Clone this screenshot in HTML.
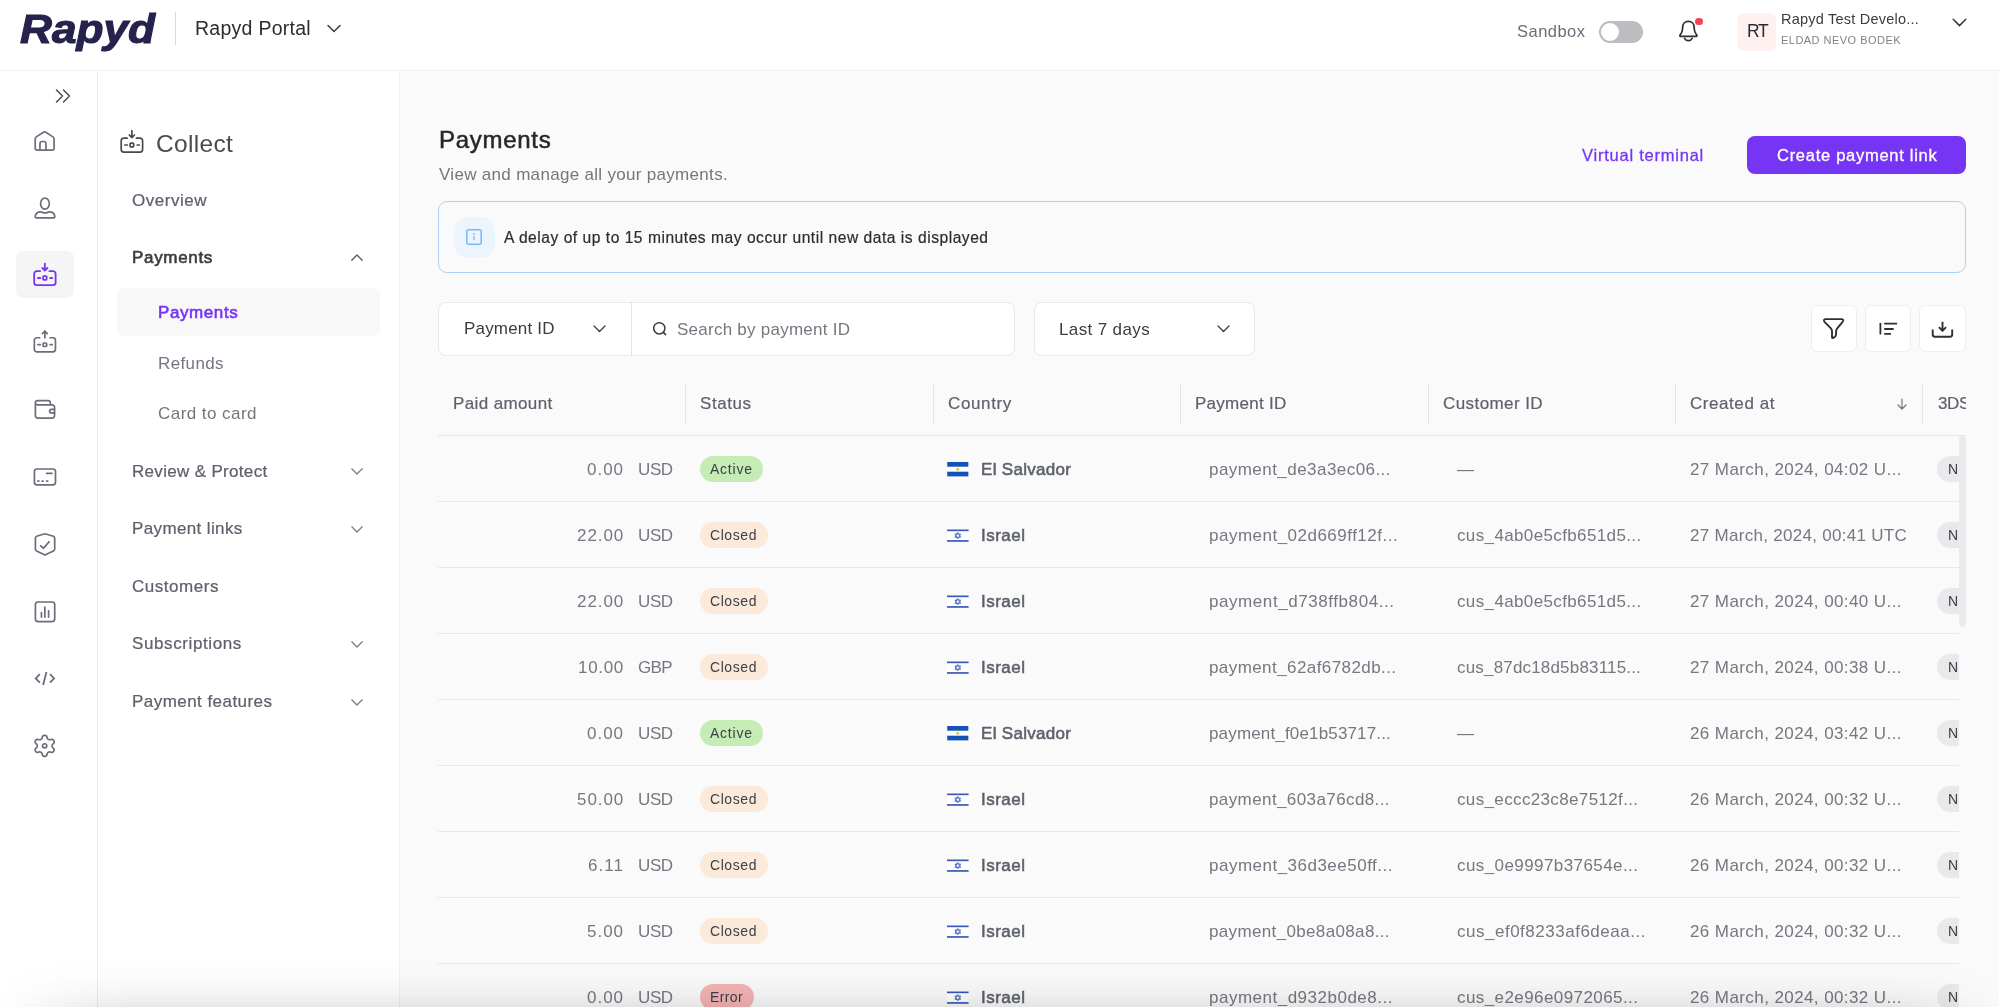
<!DOCTYPE html>
<html lang="en">
<head>
<meta charset="utf-8">
<title>Rapyd Portal - Payments</title>
<style>
*{box-sizing:border-box;margin:0;padding:0}
html,body{width:1999px;height:1008px;overflow:hidden;background:#fff}
body{font-family:"Liberation Sans",sans-serif;color:#4b4e57;position:relative}
.abs{position:absolute}
.t{position:absolute;white-space:nowrap;line-height:1;transform:translateY(-50%);will-change:transform}
svg{position:absolute;overflow:visible}
.ic{fill:none;stroke:#5f636d;stroke-width:1.7;stroke-linecap:round;stroke-linejoin:round}
.pu{stroke:#7635f5}
#hdr{left:0;top:0;width:1999px;height:71px;background:#fff;border-bottom:1px solid #f1f1f2}
#sb1{left:0;top:71px;width:98px;height:937px;background:#fff;border-right:1px solid #ececee}
#sb2{left:98px;top:71px;width:302px;height:937px;background:#fff;border-right:1px solid #f1f1f2}
#main{left:400px;top:71px;width:1599px;height:937px;background:#fafafa}
.sep{position:absolute;top:383px;width:1px;height:40px;background:#e4e4e7}
.rl{position:absolute;left:438px;width:1521px;height:1px;background:#e8e8ea}
.badge{position:absolute;height:26px;border-radius:13px}
.b-Active{background:#c6ecb6}
.b-Closed{background:#fbe9da}
.b-Error{background:#f5b4b4}
.b-N{background:#e9e9eb}
.box{position:absolute;background:#fff;border:1px solid #e9e9ec}
</style>
</head>
<body>
<div id="hdr" class="abs"></div>
<div id="sb1" class="abs"></div>
<div id="sb2" class="abs"></div>
<div id="main" class="abs"></div>

<!-- header shapes -->
<div class="abs" style="left:175px;top:12px;width:1px;height:33px;background:#d9d9de"></div>
<svg style="left:327px;top:24px" width="14" height="9" viewBox="0 0 14 9"><path class="ic" style="stroke:#3a3c42;stroke-width:1.5" d="M1 1.5 L7 7.5 L13 1.5"/></svg>
<div class="abs" style="left:1598.5px;top:20.5px;width:44px;height:22.5px;border-radius:11.5px;background:#bcbdc1"></div>
<div class="abs" style="left:1600.5px;top:22.5px;width:18.5px;height:18.5px;border-radius:50%;background:#fff"></div>
<svg style="left:1677px;top:18px" width="24" height="24" viewBox="0 0 24 24"><path class="ic" style="stroke:#2e2f34;stroke-width:1.7" d="M3.6 18.4 C2.9 18.4 2.6 17.7 3.0 17.1 C4.8 14.9 5.6 13.3 5.6 10.5 V9.6 C5.6 6.0 8.0 3.4 11.4 3.4 C14.8 3.4 17.2 6.0 17.2 9.6 V10.5 C17.2 13.3 18.0 14.9 19.8 17.1 C20.2 17.7 19.9 18.4 19.2 18.4 Z M7.6 20.4 C8.4 21.9 9.7 22.7 11.4 22.7 C13.1 22.7 14.4 21.9 15.2 20.4"/></svg>
<div class="abs" style="left:1695.2px;top:17.500px;width:7.600px;height:7.600px;border-radius:50%;background:#f0444f"></div>
<div class="abs" style="left:1737px;top:12.5px;width:39px;height:38.5px;border-radius:7px;background:#fef1f0"></div>
<svg style="left:1952px;top:18px" width="15" height="9" viewBox="0 0 15 9"><path class="ic" style="stroke:#3a3c42;stroke-width:1.5" d="M1.2 1.2 L7.500 7.600 L13.800 1.2"/></svg>

<!-- sidebar 1 icons -->
<svg style="left:55px;top:89px" width="16" height="14" viewBox="0 0 16 14"><path class="ic" style="stroke:#4a4b50;stroke-width:1.5" d="M1.5 1 L7.500 7 L1.5 13 M8.5 1 L14.500 7 L8.5 13"/></svg>
<svg style="left:25px;top:121px" width="40" height="40" viewBox="0 0 40 40"><g fill="none" stroke="#6a6e78" stroke-width="1.7" stroke-linecap="round" stroke-linejoin="round"><path d="M18.9 11.0 L11.3 15.9 Q10.2 16.6 10.2 17.9 V27.0 Q10.2 29.1 12.3 29.1 H27.0 Q29.1 29.1 29.1 27.0 V17.9 Q29.1 16.6 28.0 15.9 L20.4 11.0 Q19.65 10.5 18.9 11.0 Z"/><path d="M14.95 29.1 V22.8 Q14.95 20.5 17.25 20.5 H18.65 Q20.95 20.5 20.95 22.8 V29.1"/></g></svg>
<svg style="left:25px;top:188px" width="40" height="40" viewBox="0 0 40 40"><g fill="none" stroke="#6a6e78" stroke-width="1.7" stroke-linecap="round" stroke-linejoin="round"><ellipse cx="19.95" cy="15.65" rx="4.4" ry="5.5"/><path d="M12.0 29.9 Q10.2 29.9 10.2 28.4 C10.4 25.6 13.0 23.7 15.4 23.8 C17.0 23.9 18.2 24.9 20 24.9 C21.8 24.9 23.0 23.9 24.6 23.8 C27.0 23.7 29.6 25.6 29.8 28.4 Q29.8 29.9 28.0 29.9 Z"/></g></svg>
<div class="abs" style="left:16px;top:251px;width:58px;height:47px;border-radius:7px;background:#f5f5f6"></div>
<svg style="left:25px;top:255px" width="40" height="40" viewBox="0 0 40 40"><g fill="none" stroke="#7635f5" stroke-width="1.8" stroke-linecap="round" stroke-linejoin="round"><path d="M15.15 16.2 H11.8 A2.6 2.6 0 0 0 9.2 18.8 V27.5 A2.6 2.6 0 0 0 11.8 30.1 H28 A2.6 2.6 0 0 0 30.6 27.5 V18.8 A2.6 2.6 0 0 0 28 16.2 H24.45"/><path d="M19.85 8.6 V15.5 M17.3 13.0 L19.85 15.6 L22.4 13.0"/><path d="M12.9 23 H15.3 M25.2 23 H27.2"/><rect x="18.05" y="21.2" width="3.6" height="3.7" rx="0.8"/></g></svg>
<svg style="left:25px;top:322px" width="40" height="40" viewBox="0 0 40 40"><g fill="none" stroke="#6a6e78" stroke-width="1.7" stroke-linecap="round" stroke-linejoin="round"><path d="M14.65 15.75 H11.95 A2.6 2.6 0 0 0 9.35 18.35 V27.3 A2.6 2.6 0 0 0 11.95 29.9 H27.85 A2.6 2.6 0 0 0 30.45 27.3 V18.35 A2.6 2.6 0 0 0 27.85 15.75 H25.05"/><path d="M19.85 15.85 V9.0 M17.4 11.6 L19.85 9.0 L22.3 11.6"/><path d="M12.9 22.7 H15.3 M25.2 22.7 H27.2"/><rect x="18.05" y="21.0" width="3.6" height="3.5" rx="0.8"/></g></svg>
<svg style="left:25px;top:389px" width="40" height="40" viewBox="0 0 40 40"><g fill="none" stroke="#6a6e78" stroke-width="1.7" stroke-linecap="round" stroke-linejoin="round"><path d="M10.4 13.4 V26.8 A2.3 2.3 0 0 0 12.7 29.1 H27.2 A2.3 2.3 0 0 0 29.5 26.8 V18.2 A2.3 2.3 0 0 0 27.2 15.9 H12.5 A2.1 2.1 0 0 1 10.4 13.7 A2.1 2.1 0 0 1 12.5 11.6 H23.2 A2.1 2.1 0 0 1 25.3 13.7 V15.9"/><path d="M29.5 20.3 H26.45 A1.82 1.82 0 0 0 26.45 23.95 H29.5"/></g></svg>
<svg style="left:25px;top:457px" width="40" height="40" viewBox="0 0 40 40"><g fill="none" stroke="#6a6e78" stroke-width="1.7" stroke-linecap="round" stroke-linejoin="round"><rect x="9.4" y="12" width="21.1" height="15.9" rx="2.6"/><path d="M21.6 16.35 H27.0"/><path d="M12.9 24.1 H13.9 M17.1 24.1 H18.05 M21.6 24.1 H22.8"/></g></svg>
<svg style="left:25px;top:524px" width="40" height="40" viewBox="0 0 40 40"><g fill="none" stroke="#6a6e78" stroke-width="1.7" stroke-linecap="round" stroke-linejoin="round"><path d="M19.0 10.0 L11.6 12.2 Q10.4 12.7 10.4 14.2 V25.0 Q10.4 26.3 11.5 26.9 L19.0 30.6 Q19.9 31.0 20.8 30.6 L28.5 26.9 Q29.7 26.3 29.7 25.0 V14.2 Q29.7 12.7 28.4 12.2 L20.8 10.0 Q19.9 9.7 19.0 10.0 Z"/><path d="M15.2 21.3 L18.3 24.2 L24.5 17.4" stroke-linecap="butt" stroke-linejoin="miter"/></g></svg>
<svg style="left:25px;top:592px" width="40" height="40" viewBox="0 0 40 40"><g fill="none" stroke="#6a6e78" stroke-width="1.7" stroke-linecap="round" stroke-linejoin="round"><rect x="10.4" y="10.0" width="19.3" height="19.7" rx="2.6"/><path d="M16.45 20.6 V25.1 M19.85 15.0 V25.1 M23.6 18.8 V25.1"/></g></svg>
<svg style="left:25px;top:658px" width="40" height="40" viewBox="0 0 40 40"><g fill="none" stroke="#6a6e78" stroke-width="1.8" stroke-linecap="butt" stroke-linejoin="miter"><path d="M14.8 16.1 L10.7 20.4 L14.8 24.7 M25.0 16.1 L29.1 20.4 L25.0 24.7 M21.5 14.0 L18.1 26.9"/></g></svg>
<svg style="left:25px;top:725px" width="40" height="40" viewBox="0 0 40 40"><g fill="none" stroke="#6a6e78" stroke-width="1.7" stroke-linecap="round" stroke-linejoin="round"><path d="M19.65 10.30 L20.11 10.34 L20.56 10.46 L20.99 10.66 L21.40 10.94 L21.76 11.34 L21.98 12.16 L22.13 12.97 L22.37 13.39 L22.60 13.72 L22.85 13.99 L23.10 14.22 L23.38 14.40 L23.67 14.54 L23.99 14.65 L24.35 14.73 L24.75 14.77 L25.23 14.76 L26.01 14.49 L26.83 14.27 L27.36 14.38 L27.81 14.59 L28.20 14.87 L28.52 15.20 L28.79 15.57 L28.98 15.99 L29.10 16.44 L29.15 16.92 L29.10 17.41 L28.94 17.92 L28.34 18.52 L27.72 19.06 L27.47 19.47 L27.30 19.84 L27.19 20.19 L27.12 20.52 L27.10 20.85 L27.12 21.18 L27.19 21.51 L27.30 21.86 L27.47 22.23 L27.72 22.64 L28.34 23.18 L28.94 23.78 L29.10 24.29 L29.15 24.78 L29.10 25.26 L28.98 25.71 L28.79 26.12 L28.52 26.50 L28.20 26.83 L27.81 27.11 L27.36 27.32 L26.83 27.43 L26.01 27.21 L25.23 26.94 L24.75 26.93 L24.35 26.97 L23.99 27.05 L23.67 27.16 L23.38 27.30 L23.10 27.48 L22.85 27.71 L22.60 27.98 L22.37 28.31 L22.13 28.73 L21.98 29.54 L21.76 30.36 L21.40 30.76 L20.99 31.04 L20.56 31.24 L20.11 31.36 L19.65 31.40 L19.19 31.36 L18.74 31.24 L18.31 31.04 L17.90 30.76 L17.54 30.36 L17.32 29.54 L17.17 28.73 L16.93 28.31 L16.70 27.98 L16.45 27.71 L16.20 27.48 L15.92 27.30 L15.63 27.16 L15.31 27.05 L14.95 26.97 L14.55 26.93 L14.07 26.94 L13.29 27.21 L12.47 27.43 L11.94 27.32 L11.49 27.11 L11.10 26.83 L10.78 26.50 L10.51 26.13 L10.32 25.71 L10.20 25.26 L10.15 24.78 L10.20 24.29 L10.36 23.78 L10.96 23.18 L11.58 22.64 L11.83 22.23 L12.00 21.86 L12.11 21.51 L12.18 21.18 L12.20 20.85 L12.18 20.52 L12.11 20.19 L12.00 19.84 L11.83 19.47 L11.58 19.06 L10.96 18.52 L10.36 17.92 L10.20 17.41 L10.15 16.92 L10.20 16.44 L10.32 15.99 L10.51 15.58 L10.78 15.20 L11.10 14.87 L11.49 14.59 L11.94 14.38 L12.47 14.27 L13.29 14.49 L14.07 14.76 L14.55 14.77 L14.95 14.73 L15.31 14.65 L15.63 14.54 L15.93 14.40 L16.20 14.22 L16.45 13.99 L16.70 13.72 L16.93 13.39 L17.17 12.97 L17.32 12.16 L17.54 11.34 L17.90 10.94 L18.31 10.66 L18.74 10.46 L19.19 10.34 Z"/><circle cx="19.65" cy="20.85" r="2.1"/></g></svg>
<svg style="left:111.7px;top:121.7px" width="40" height="40" viewBox="0 0 40 40"><g fill="none" stroke="#4a4b50" stroke-width="1.7" stroke-linecap="round" stroke-linejoin="round"><path d="M15.15 16.2 H11.8 A2.6 2.6 0 0 0 9.2 18.8 V27.5 A2.6 2.6 0 0 0 11.8 30.1 H28 A2.6 2.6 0 0 0 30.6 27.5 V18.8 A2.6 2.6 0 0 0 28 16.2 H24.45"/><path d="M19.85 8.6 V15.5 M17.3 13.0 L19.85 15.6 L22.4 13.0"/><path d="M12.9 23 H15.3 M25.2 23 H27.2"/><rect x="18.05" y="21.2" width="3.6" height="3.7" rx="0.8"/></g></svg>

<!-- sidebar 2 shapes -->
<div class="abs" style="left:117px;top:288px;width:263px;height:48px;border-radius:6px;background:#f8f8f9"></div>
<svg style="left:351px;top:253.500px" width="12" height="7" viewBox="0 0 12 7"><path class="ic" style="stroke-width:1.3;stroke:#55585f" d="M0.8 6.2 L6 1 L11.2 6.2"/></svg>
<svg style="left:351px;top:468px" width="12" height="7" viewBox="0 0 12 7"><path class="ic" style="stroke-width:1.25;stroke:#777a83" d="M0.8 0.8 L6 6 L11.2 0.8"/></svg>
<svg style="left:351px;top:525.500px" width="12" height="7" viewBox="0 0 12 7"><path class="ic" style="stroke-width:1.25;stroke:#777a83" d="M0.8 0.8 L6 6 L11.2 0.8"/></svg>
<svg style="left:351px;top:640.500px" width="12" height="7" viewBox="0 0 12 7"><path class="ic" style="stroke-width:1.25;stroke:#777a83" d="M0.8 0.8 L6 6 L11.2 0.8"/></svg>
<svg style="left:351px;top:698.500px" width="12" height="7" viewBox="0 0 12 7"><path class="ic" style="stroke-width:1.25;stroke:#777a83" d="M0.8 0.8 L6 6 L11.2 0.8"/></svg>

<!-- main shapes -->
<div class="abs" style="left:1747px;top:136px;width:219px;height:38px;border-radius:8px;background:#7635f5"></div>
<div class="abs" style="left:438px;top:201px;width:1528px;height:72px;border-radius:9px;border:1px solid #a9d3f8;background:#fafafa"></div>
<div class="abs" style="left:454px;top:217px;width:40.5px;height:41px;border-radius:14px;background:#ecf5fe"></div>
<svg style="left:466px;top:229px" width="16" height="16" viewBox="0 0 16 16"><rect x="0.800" y="0.800" width="14.400" height="14.400" rx="2" fill="none" stroke="#76b9fb" stroke-width="1.5"/><path d="M8 7.200 V11.200" stroke="#76b9fb" stroke-width="1.4" fill="none"/><circle cx="8" cy="5" r="0.900" fill="#76b9fb"/></svg>

<div class="box" style="left:438px;top:301.5px;width:577px;height:54px;border-radius:8px"></div>
<div class="abs" style="left:630.5px;top:302.5px;width:1px;height:52px;background:#e2e2e5"></div>
<svg style="left:593px;top:325px" width="13" height="8" viewBox="0 0 13 8"><path class="ic" style="stroke:#3a3c42;stroke-width:1.4" d="M1 1 L6.500 6.500 L12 1"/></svg>
<svg style="left:651.500px;top:320.500px" width="16" height="16" viewBox="0 0 16 16"><circle class="ic" style="stroke:#3a3c42;stroke-width:1.5" cx="7.300" cy="7.300" r="5.600"/><path class="ic" style="stroke:#3a3c42;stroke-width:1.5" d="M11.400 11.400 L13.600 13.600"/></svg>
<div class="box" style="left:1034px;top:302px;width:221px;height:53.500px;border-radius:8px"></div>
<svg style="left:1217px;top:325px" width="13" height="8" viewBox="0 0 13 8"><path class="ic" style="stroke:#3a3c42;stroke-width:1.4" d="M1 1 L6.500 6.500 L12 1"/></svg>
<div class="box" style="left:1811px;top:304.5px;width:46px;height:47px;border-radius:6px;border-color:#efeff1"></div>
<div class="box" style="left:1865px;top:304.5px;width:46px;height:47px;border-radius:6px;border-color:#efeff1"></div>
<div class="box" style="left:1919px;top:304.5px;width:46.5px;height:47px;border-radius:6px;border-color:#efeff1"></div>
<svg style="left:0;top:0" width="1999" height="400" viewBox="0 0 1999 400"><g fill="none" stroke="#2e2f34" stroke-width="1.9" stroke-linejoin="round"><path d="M1825.6 319.1 H1841.6 Q1843.6 319.1 1843.1 321.0 Q1842.8 321.8 1842.0 322.7 L1837.4 328.2 Q1836.1 329.6 1836.1 331.2 V334.0 Q1836.1 336.0 1834.8 336.9 L1833.2 337.9 Q1832.0 338.4 1832.0 337.2 V331.2 Q1832.0 329.6 1830.7 328.2 L1825.2 322.7 Q1824.4 321.8 1824.1 321.0 Q1823.6 319.1 1825.6 319.1 Z"/><path stroke-width="1.8" d="M1880.4 322.9 V334.6 M1884.2 323.6 H1897.1 M1884.2 329 H1893.7 M1884.2 333.9 H1891"/><path stroke-width="1.9" d="M1942.5 321.8 V330.4 M1938.9 327.2 L1942.5 330.8 L1946.1 327.2"/><path stroke-width="1.9" d="M1932.7 329.4 V334.6 Q1932.7 336.8 1934.9 336.8 H1950.0 Q1952.2 336.8 1952.2 334.6 V329.4"/></g></svg>

<!-- table -->
<div class="sep" style="left:685px"></div>
<div class="sep" style="left:932.5px"></div>
<div class="sep" style="left:1180px"></div>
<div class="sep" style="left:1427.5px"></div>
<div class="sep" style="left:1675px"></div>
<div class="sep" style="left:1922px"></div>
<div class="rl" style="top:435px;background:#e6e6e9"></div>
<div class="rl" style="top:501px"></div>
<div class="rl" style="top:567px"></div>
<div class="rl" style="top:633px"></div>
<div class="rl" style="top:699px"></div>
<div class="rl" style="top:765px"></div>
<div class="rl" style="top:831px"></div>
<div class="rl" style="top:897px"></div>
<div class="rl" style="top:963px"></div>
<div class="badge b-Active" style="left:699.5px;top:456px;width:63.5px"></div>
<div class="badge b-N" style="left:1936.5px;top:456px;width:40px"></div>
<svg style="left:947.2px;top:461.9px" width="21.6" height="14.4" viewBox="0 0 22 15"><rect width="22" height="15" fill="#fff"/><rect width="22" height="4.9" fill="#1452b8"/><rect y="10.1" width="22" height="4.9" fill="#1452b8"/><circle cx="11" cy="7.6" r="1.5" fill="#dcc04e"/></svg>
<div class="badge b-Closed" style="left:699.5px;top:522px;width:68px"></div>
<div class="badge b-N" style="left:1936.5px;top:522px;width:40px"></div>
<svg style="left:947.2px;top:527.5px" width="21.6" height="15" viewBox="0 0 22 15"><rect y="1.2" width="22" height="12.8" fill="#fff"/><rect y="1.4" width="22" height="1.7" fill="#3a55b8"/><rect y="12.2" width="22" height="1.7" fill="#3a55b8"/><path d="M11 4.4 L13.9 9.3 H8.1 Z M11 10.9 L8.1 6.0 H13.9 Z" fill="none" stroke="#4a63c0" stroke-width="0.9"/></svg>
<div class="badge b-Closed" style="left:699.5px;top:588px;width:68px"></div>
<div class="badge b-N" style="left:1936.5px;top:588px;width:40px"></div>
<svg style="left:947.2px;top:593.5px" width="21.6" height="15" viewBox="0 0 22 15"><rect y="1.2" width="22" height="12.8" fill="#fff"/><rect y="1.4" width="22" height="1.7" fill="#3a55b8"/><rect y="12.2" width="22" height="1.7" fill="#3a55b8"/><path d="M11 4.4 L13.9 9.3 H8.1 Z M11 10.9 L8.1 6.0 H13.9 Z" fill="none" stroke="#4a63c0" stroke-width="0.9"/></svg>
<div class="badge b-Closed" style="left:699.5px;top:654px;width:68px"></div>
<div class="badge b-N" style="left:1936.5px;top:654px;width:40px"></div>
<svg style="left:947.2px;top:659.5px" width="21.6" height="15" viewBox="0 0 22 15"><rect y="1.2" width="22" height="12.8" fill="#fff"/><rect y="1.4" width="22" height="1.7" fill="#3a55b8"/><rect y="12.2" width="22" height="1.7" fill="#3a55b8"/><path d="M11 4.4 L13.9 9.3 H8.1 Z M11 10.9 L8.1 6.0 H13.9 Z" fill="none" stroke="#4a63c0" stroke-width="0.9"/></svg>
<div class="badge b-Active" style="left:699.5px;top:720px;width:63.5px"></div>
<div class="badge b-N" style="left:1936.5px;top:720px;width:40px"></div>
<svg style="left:947.2px;top:725.9px" width="21.6" height="14.4" viewBox="0 0 22 15"><rect width="22" height="15" fill="#fff"/><rect width="22" height="4.9" fill="#1452b8"/><rect y="10.1" width="22" height="4.9" fill="#1452b8"/><circle cx="11" cy="7.6" r="1.5" fill="#dcc04e"/></svg>
<div class="badge b-Closed" style="left:699.5px;top:786px;width:68px"></div>
<div class="badge b-N" style="left:1936.5px;top:786px;width:40px"></div>
<svg style="left:947.2px;top:791.5px" width="21.6" height="15" viewBox="0 0 22 15"><rect y="1.2" width="22" height="12.8" fill="#fff"/><rect y="1.4" width="22" height="1.7" fill="#3a55b8"/><rect y="12.2" width="22" height="1.7" fill="#3a55b8"/><path d="M11 4.4 L13.9 9.3 H8.1 Z M11 10.9 L8.1 6.0 H13.9 Z" fill="none" stroke="#4a63c0" stroke-width="0.9"/></svg>
<div class="badge b-Closed" style="left:699.5px;top:852px;width:68px"></div>
<div class="badge b-N" style="left:1936.5px;top:852px;width:40px"></div>
<svg style="left:947.2px;top:857.5px" width="21.6" height="15" viewBox="0 0 22 15"><rect y="1.2" width="22" height="12.8" fill="#fff"/><rect y="1.4" width="22" height="1.7" fill="#3a55b8"/><rect y="12.2" width="22" height="1.7" fill="#3a55b8"/><path d="M11 4.4 L13.9 9.3 H8.1 Z M11 10.9 L8.1 6.0 H13.9 Z" fill="none" stroke="#4a63c0" stroke-width="0.9"/></svg>
<div class="badge b-Closed" style="left:699.5px;top:918px;width:68px"></div>
<div class="badge b-N" style="left:1936.5px;top:918px;width:40px"></div>
<svg style="left:947.2px;top:923.5px" width="21.6" height="15" viewBox="0 0 22 15"><rect y="1.2" width="22" height="12.8" fill="#fff"/><rect y="1.4" width="22" height="1.7" fill="#3a55b8"/><rect y="12.2" width="22" height="1.7" fill="#3a55b8"/><path d="M11 4.4 L13.9 9.3 H8.1 Z M11 10.9 L8.1 6.0 H13.9 Z" fill="none" stroke="#4a63c0" stroke-width="0.9"/></svg>
<div class="badge b-Error" style="left:699.5px;top:984px;width:54.5px"></div>
<div class="badge b-N" style="left:1936.5px;top:984px;width:40px"></div>
<svg style="left:947.2px;top:989.5px" width="21.6" height="15" viewBox="0 0 22 15"><rect y="1.2" width="22" height="12.8" fill="#fff"/><rect y="1.4" width="22" height="1.7" fill="#3a55b8"/><rect y="12.2" width="22" height="1.7" fill="#3a55b8"/><path d="M11 4.4 L13.9 9.3 H8.1 Z M11 10.9 L8.1 6.0 H13.9 Z" fill="none" stroke="#4a63c0" stroke-width="0.9"/></svg>
<svg style="left:1896.3px;top:397.5px" width="12" height="12" viewBox="0 0 12 12"><path class="ic" style="stroke:#73767f;stroke-width:1.2" d="M6 1 V11 M2 7 L6 11 L10 7"/></svg>

<div class="t" style="left:20.0px;top:28.7px;font-size:41.5px;color:#25224c;font-weight:700;font-style:italic;-webkit-text-stroke:1.1px #25224c;transform:translateY(-50%) scaleX(1.065);transform-origin:0 50%;">Rapyd</div>
<div class="t" style="left:195.0px;top:28.8px;font-size:19.5px;color:#2b2c32;letter-spacing:0.27px;">Rapyd Portal</div>
<div class="t" style="left:1517.0px;top:31.2px;font-size:16.5px;color:#6b6e78;letter-spacing:0.48px;">Sandbox</div>
<div class="t" style="left:1746.8px;top:32.4px;font-size:17.5px;color:#2b2c32;letter-spacing:-1.20px;">RT</div>
<div class="t" style="left:1781.0px;top:18.7px;font-size:14.5px;color:#3a3c42;letter-spacing:0.22px;">Rapyd Test Develo...</div>
<div class="t" style="left:1781.0px;top:40.0px;font-size:11px;color:#7f828a;letter-spacing:0.47px;">ELDAD NEVO BODEK</div>
<div class="t" style="left:156.3px;top:143.5px;font-size:24.5px;color:#4a4b50;letter-spacing:0.34px;">Collect</div>
<div class="t" style="left:132.0px;top:199.6px;font-size:17px;color:#5d616b;letter-spacing:0.52px;-webkit-text-stroke:0.22px #5d616b;">Overview</div>
<div class="t" style="left:131.8px;top:257.3px;font-size:17px;color:#3a3c42;letter-spacing:0.68px;-webkit-text-stroke:0.6px #3a3c42;">Payments</div>
<div class="t" style="left:157.7px;top:312.3px;font-size:17px;color:#7635f5;letter-spacing:0.59px;-webkit-text-stroke:0.6px #7635f5;">Payments</div>
<div class="t" style="left:157.7px;top:362.8px;font-size:17px;color:#73767f;letter-spacing:0.38px;">Refunds</div>
<div class="t" style="left:157.7px;top:413.3px;font-size:17px;color:#73767f;letter-spacing:0.45px;">Card to card</div>
<div class="t" style="left:131.8px;top:471.3px;font-size:17px;color:#5d616b;letter-spacing:0.32px;-webkit-text-stroke:0.22px #5d616b;">Review &amp; Protect</div>
<div class="t" style="left:131.8px;top:528.1px;font-size:17px;color:#5d616b;letter-spacing:0.37px;-webkit-text-stroke:0.22px #5d616b;">Payment links</div>
<div class="t" style="left:131.8px;top:586.3px;font-size:17px;color:#5d616b;letter-spacing:0.53px;-webkit-text-stroke:0.22px #5d616b;">Customers</div>
<div class="t" style="left:131.8px;top:643.4px;font-size:17px;color:#5d616b;letter-spacing:0.61px;-webkit-text-stroke:0.22px #5d616b;">Subscriptions</div>
<div class="t" style="left:131.8px;top:701.3px;font-size:17px;color:#5d616b;letter-spacing:0.45px;-webkit-text-stroke:0.22px #5d616b;">Payment features</div>
<div class="t" style="left:438.7px;top:140.0px;font-size:24px;color:#26272b;letter-spacing:0.72px;-webkit-text-stroke:0.5px #26272b;">Payments</div>
<div class="t" style="left:438.7px;top:173.8px;font-size:17px;color:#73767f;letter-spacing:0.31px;">View and manage all your payments.</div>
<div class="t" style="left:1582.0px;top:154.5px;font-size:16.5px;color:#7635f5;letter-spacing:0.77px;-webkit-text-stroke:0.3px #7635f5;">Virtual terminal</div>
<div class="t" style="left:1776.5px;top:154.5px;font-size:16.5px;color:#ffffff;letter-spacing:0.72px;-webkit-text-stroke:0.3px #fff;">Create payment link</div>
<div class="t" style="left:504.4px;top:238.2px;font-size:15.6px;color:#2b2c32;letter-spacing:0.52px;-webkit-text-stroke:0.2px #2b2c32;">A delay of up to 15 minutes may occur until new data is displayed</div>
<div class="t" style="left:464.0px;top:327.9px;font-size:17px;color:#3a3c42;letter-spacing:0.19px;">Payment ID</div>
<div class="t" style="left:676.8px;top:329.3px;font-size:17px;color:#75787f;letter-spacing:0.25px;">Search by payment ID</div>
<div class="t" style="left:1059.0px;top:328.8px;font-size:17px;color:#3a3c42;letter-spacing:0.37px;">Last 7 days</div>
<div class="t" style="left:453.0px;top:403.3px;font-size:17px;color:#5d616b;letter-spacing:0.38px;-webkit-text-stroke:0.2px #5d616b;">Paid amount</div>
<div class="t" style="left:700.0px;top:403.3px;font-size:17px;color:#5d616b;letter-spacing:0.57px;-webkit-text-stroke:0.2px #5d616b;">Status</div>
<div class="t" style="left:948.0px;top:403.3px;font-size:17px;color:#5d616b;letter-spacing:0.64px;-webkit-text-stroke:0.2px #5d616b;">Country</div>
<div class="t" style="left:1195.0px;top:403.3px;font-size:17px;color:#5d616b;letter-spacing:0.27px;-webkit-text-stroke:0.2px #5d616b;">Payment ID</div>
<div class="t" style="left:1442.5px;top:403.3px;font-size:17px;color:#5d616b;letter-spacing:0.42px;-webkit-text-stroke:0.2px #5d616b;">Customer ID</div>
<div class="t" style="left:1690.0px;top:403.3px;font-size:17px;color:#5d616b;letter-spacing:0.56px;-webkit-text-stroke:0.2px #5d616b;">Created at</div>
<div class="t" style="left:1938.0px;top:403.3px;font-size:17px;color:#5d616b;letter-spacing:-0.36px;-webkit-text-stroke:0.2px #5d616b;">3DS</div>
<div class="t" style="left:587.0px;top:469.3px;font-size:17px;color:#757881;letter-spacing:0.98px;">0.00</div>
<div class="t" style="left:638.0px;top:469.3px;font-size:17px;color:#757881;letter-spacing:-0.40px;">USD</div>
<div class="t" style="left:710.0px;top:468.5px;font-size:14px;color:#3c3f47;letter-spacing:0.76px;">Active</div>
<div class="t" style="left:981.0px;top:469.3px;font-size:17px;color:#5d616b;letter-spacing:0.31px;-webkit-text-stroke:0.55px #5d616b;">El Salvador</div>
<div class="t" style="left:1209.0px;top:469.3px;font-size:17px;color:#757881;letter-spacing:0.45px;">payment_de3a3ec06...</div>
<div class="t" style="left:1456.5px;top:469.3px;font-size:17px;color:#757881;">—</div>
<div class="t" style="left:1690.0px;top:469.3px;font-size:17px;color:#757881;letter-spacing:0.41px;">27 March, 2024, 04:02 U...</div>
<div class="t" style="left:1947.5px;top:469.0px;font-size:14px;color:#3c3f47;">N</div>
<div class="t" style="left:576.7px;top:535.3px;font-size:17px;color:#757881;letter-spacing:0.93px;">22.00</div>
<div class="t" style="left:638.0px;top:535.3px;font-size:17px;color:#757881;letter-spacing:-0.40px;">USD</div>
<div class="t" style="left:710.0px;top:534.5px;font-size:14px;color:#3c3f47;letter-spacing:0.57px;">Closed</div>
<div class="t" style="left:981.0px;top:535.3px;font-size:17px;color:#5d616b;letter-spacing:0.47px;-webkit-text-stroke:0.55px #5d616b;">Israel</div>
<div class="t" style="left:1209.0px;top:535.3px;font-size:17px;color:#757881;letter-spacing:0.49px;">payment_02d669ff12f...</div>
<div class="t" style="left:1456.5px;top:535.3px;font-size:17px;color:#757881;letter-spacing:0.37px;">cus_4ab0e5cfb651d5...</div>
<div class="t" style="left:1690.0px;top:535.3px;font-size:17px;color:#757881;letter-spacing:0.29px;">27 March, 2024, 00:41 UTC</div>
<div class="t" style="left:1947.5px;top:535.0px;font-size:14px;color:#3c3f47;">N</div>
<div class="t" style="left:576.7px;top:601.3px;font-size:17px;color:#757881;letter-spacing:0.93px;">22.00</div>
<div class="t" style="left:638.0px;top:601.3px;font-size:17px;color:#757881;letter-spacing:-0.40px;">USD</div>
<div class="t" style="left:710.0px;top:600.5px;font-size:14px;color:#3c3f47;letter-spacing:0.57px;">Closed</div>
<div class="t" style="left:981.0px;top:601.3px;font-size:17px;color:#5d616b;letter-spacing:0.47px;-webkit-text-stroke:0.55px #5d616b;">Israel</div>
<div class="t" style="left:1209.0px;top:601.3px;font-size:17px;color:#757881;letter-spacing:0.57px;">payment_d738ffb804...</div>
<div class="t" style="left:1456.5px;top:601.3px;font-size:17px;color:#757881;letter-spacing:0.37px;">cus_4ab0e5cfb651d5...</div>
<div class="t" style="left:1690.0px;top:601.3px;font-size:17px;color:#757881;letter-spacing:0.41px;">27 March, 2024, 00:40 U...</div>
<div class="t" style="left:1947.5px;top:601.0px;font-size:14px;color:#3c3f47;">N</div>
<div class="t" style="left:577.7px;top:667.3px;font-size:17px;color:#757881;letter-spacing:0.69px;">10.00</div>
<div class="t" style="left:638.0px;top:667.3px;font-size:17px;color:#757881;letter-spacing:-0.64px;">GBP</div>
<div class="t" style="left:710.0px;top:666.5px;font-size:14px;color:#3c3f47;letter-spacing:0.57px;">Closed</div>
<div class="t" style="left:981.0px;top:667.3px;font-size:17px;color:#5d616b;letter-spacing:0.47px;-webkit-text-stroke:0.55px #5d616b;">Israel</div>
<div class="t" style="left:1209.0px;top:667.3px;font-size:17px;color:#757881;letter-spacing:0.42px;">payment_62af6782db...</div>
<div class="t" style="left:1456.5px;top:667.3px;font-size:17px;color:#757881;letter-spacing:0.18px;">cus_87dc18d5b83115...</div>
<div class="t" style="left:1690.0px;top:667.3px;font-size:17px;color:#757881;letter-spacing:0.41px;">27 March, 2024, 00:38 U...</div>
<div class="t" style="left:1947.5px;top:667.0px;font-size:14px;color:#3c3f47;">N</div>
<div class="t" style="left:587.0px;top:733.3px;font-size:17px;color:#757881;letter-spacing:0.98px;">0.00</div>
<div class="t" style="left:638.0px;top:733.3px;font-size:17px;color:#757881;letter-spacing:-0.40px;">USD</div>
<div class="t" style="left:710.0px;top:732.5px;font-size:14px;color:#3c3f47;letter-spacing:0.76px;">Active</div>
<div class="t" style="left:981.0px;top:733.3px;font-size:17px;color:#5d616b;letter-spacing:0.31px;-webkit-text-stroke:0.55px #5d616b;">El Salvador</div>
<div class="t" style="left:1209.0px;top:733.3px;font-size:17px;color:#757881;letter-spacing:0.16px;">payment_f0e1b53717...</div>
<div class="t" style="left:1456.5px;top:733.3px;font-size:17px;color:#757881;">—</div>
<div class="t" style="left:1690.0px;top:733.3px;font-size:17px;color:#757881;letter-spacing:0.41px;">26 March, 2024, 03:42 U...</div>
<div class="t" style="left:1947.5px;top:733.0px;font-size:14px;color:#3c3f47;">N</div>
<div class="t" style="left:576.7px;top:799.3px;font-size:17px;color:#757881;letter-spacing:0.93px;">50.00</div>
<div class="t" style="left:638.0px;top:799.3px;font-size:17px;color:#757881;letter-spacing:-0.40px;">USD</div>
<div class="t" style="left:710.0px;top:798.5px;font-size:14px;color:#3c3f47;letter-spacing:0.57px;">Closed</div>
<div class="t" style="left:981.0px;top:799.3px;font-size:17px;color:#5d616b;letter-spacing:0.47px;-webkit-text-stroke:0.55px #5d616b;">Israel</div>
<div class="t" style="left:1209.0px;top:799.3px;font-size:17px;color:#757881;letter-spacing:0.40px;">payment_603a76cd8...</div>
<div class="t" style="left:1456.5px;top:799.3px;font-size:17px;color:#757881;letter-spacing:0.36px;">cus_eccc23c8e7512f...</div>
<div class="t" style="left:1690.0px;top:799.3px;font-size:17px;color:#757881;letter-spacing:0.41px;">26 March, 2024, 00:32 U...</div>
<div class="t" style="left:1947.5px;top:799.0px;font-size:14px;color:#3c3f47;">N</div>
<div class="t" style="left:588.0px;top:865.3px;font-size:17px;color:#757881;letter-spacing:1.04px;">6.11</div>
<div class="t" style="left:638.0px;top:865.3px;font-size:17px;color:#757881;letter-spacing:-0.40px;">USD</div>
<div class="t" style="left:710.0px;top:864.5px;font-size:14px;color:#3c3f47;letter-spacing:0.57px;">Closed</div>
<div class="t" style="left:981.0px;top:865.3px;font-size:17px;color:#5d616b;letter-spacing:0.47px;-webkit-text-stroke:0.55px #5d616b;">Israel</div>
<div class="t" style="left:1209.0px;top:865.3px;font-size:17px;color:#757881;letter-spacing:0.49px;">payment_36d3ee50ff...</div>
<div class="t" style="left:1456.5px;top:865.3px;font-size:17px;color:#757881;letter-spacing:0.42px;">cus_0e9997b37654e...</div>
<div class="t" style="left:1690.0px;top:865.3px;font-size:17px;color:#757881;letter-spacing:0.41px;">26 March, 2024, 00:32 U...</div>
<div class="t" style="left:1947.5px;top:865.0px;font-size:14px;color:#3c3f47;">N</div>
<div class="t" style="left:587.0px;top:931.3px;font-size:17px;color:#757881;letter-spacing:0.98px;">5.00</div>
<div class="t" style="left:638.0px;top:931.3px;font-size:17px;color:#757881;letter-spacing:-0.40px;">USD</div>
<div class="t" style="left:710.0px;top:930.5px;font-size:14px;color:#3c3f47;letter-spacing:0.57px;">Closed</div>
<div class="t" style="left:981.0px;top:931.3px;font-size:17px;color:#5d616b;letter-spacing:0.47px;-webkit-text-stroke:0.55px #5d616b;">Israel</div>
<div class="t" style="left:1209.0px;top:931.3px;font-size:17px;color:#757881;letter-spacing:0.35px;">payment_0be8a08a8...</div>
<div class="t" style="left:1456.5px;top:931.3px;font-size:17px;color:#757881;letter-spacing:0.51px;">cus_ef0f8233af6deaa...</div>
<div class="t" style="left:1690.0px;top:931.3px;font-size:17px;color:#757881;letter-spacing:0.41px;">26 March, 2024, 00:32 U...</div>
<div class="t" style="left:1947.5px;top:931.0px;font-size:14px;color:#3c3f47;">N</div>
<div class="t" style="left:587.0px;top:997.3px;font-size:17px;color:#757881;letter-spacing:0.98px;">0.00</div>
<div class="t" style="left:638.0px;top:997.3px;font-size:17px;color:#757881;letter-spacing:-0.40px;">USD</div>
<div class="t" style="left:710.0px;top:996.5px;font-size:14px;color:#3c3f47;letter-spacing:0.38px;">Error</div>
<div class="t" style="left:981.0px;top:997.3px;font-size:17px;color:#5d616b;letter-spacing:0.47px;-webkit-text-stroke:0.55px #5d616b;">Israel</div>
<div class="t" style="left:1209.0px;top:997.3px;font-size:17px;color:#757881;letter-spacing:0.50px;">payment_d932b0de8...</div>
<div class="t" style="left:1456.5px;top:997.3px;font-size:17px;color:#757881;letter-spacing:0.42px;">cus_e2e96e0972065...</div>
<div class="t" style="left:1690.0px;top:997.3px;font-size:17px;color:#757881;letter-spacing:0.41px;">26 March, 2024, 00:32 U...</div>
<div class="t" style="left:1947.5px;top:997.0px;font-size:14px;color:#3c3f47;">N</div>

<!-- clip / scrollbar / shadow -->
<div class="abs" style="left:1966px;top:360px;width:33px;height:648px;background:#fafafa"></div>
<div class="abs" style="left:1958.500px;top:436px;width:7.500px;height:572px;background:#fafafa"></div>
<div class="abs" style="left:1958.5px;top:436px;width:7.5px;height:191px;background:#ebebed;border-radius:3px 3px 4px 4px"></div>
<div class="abs" style="left:1958px;top:435px;width:8px;height:1px;background:#e6e6e9"></div>
<div class="abs" style="left:0;top:960px;width:1999px;height:47px;background:linear-gradient(to bottom,rgba(0,0,0,0) 0%,rgba(0,0,0,0.012) 35%,rgba(0,0,0,0.04) 70%,rgba(0,0,0,0.085) 100%);-webkit-mask-image:linear-gradient(to right,rgba(0,0,0,0) 0px,rgba(0,0,0,0.35) 40px,rgba(0,0,0,0.8) 90px,rgba(0,0,0,1) 130px,rgba(0,0,0,1) 1880px,rgba(0,0,0,0.75) 1920px,rgba(0,0,0,0.3) 1965px,rgba(0,0,0,0.05) 1999px);mask-image:linear-gradient(to right,rgba(0,0,0,0) 0px,rgba(0,0,0,0.35) 40px,rgba(0,0,0,0.8) 90px,rgba(0,0,0,1) 130px,rgba(0,0,0,1) 1880px,rgba(0,0,0,0.75) 1920px,rgba(0,0,0,0.3) 1965px,rgba(0,0,0,0.05) 1999px)"></div><div class="abs" style="left:0;top:1007px;width:1999px;height:1px;background:#fff"></div>
</body>
</html>
